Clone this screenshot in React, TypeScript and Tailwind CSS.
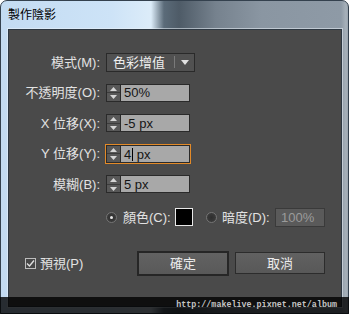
import React from "react";

const font = "font-['Liberation_Sans','Noto_Sans_CJK_TC',sans-serif]";

function Spin() {
  return (
    <div className="flex w-[14px] flex-col border-r border-[#2a2a2a] bg-[#585858]">
      <div className="flex flex-1 items-center justify-center border-b border-[#3c3c3c]">
        <svg width="7" height="4" viewBox="0 0 7 4">
          <path d="M0 4L3.5 0L7 4Z" fill="#d6d6d6" />
        </svg>
      </div>
      <div className="flex flex-1 items-center justify-center">
        <svg width="7" height="4" viewBox="0 0 7 4">
          <path d="M0 0L3.5 4L7 0Z" fill="#d6d6d6" />
        </svg>
      </div>
    </div>
  );
}

function NumField({ children, focused }: { children: React.ReactNode; focused?: boolean }) {
  return (
    <div
      className={
        focused
          ? "flex h-[18px] w-[84px] border border-[#2a2a2a] outline outline-1 outline-[#e38a28]"
          : "flex h-[18px] w-[84px] border border-[#2a2a2a]"
      }
    >
      <Spin />
      <div className="flex flex-1 items-center bg-[#a8a8a8] pl-[3px] text-[13px] leading-none text-[#151515]">
        <span className="whitespace-pre">{children}</span>
      </div>
    </div>
  );
}

function Row({ label, children }: { label: string; children: React.ReactNode }) {
  return (
    <div className="flex h-[30.5px] items-center">
      <div className="w-[91px] text-right text-[13px] leading-none text-[#e2e2e2]">{label}</div>
      <div className="ml-[6px]">{children}</div>
    </div>
  );
}

function Radio({ on }: { on?: boolean }) {
  return (
    <div className="flex h-[11px] w-[11px] items-center justify-center rounded-full border border-[#747474] bg-[radial-gradient(circle,#2e2e2e,#404040)]">
      {on && <div className="h-[3px] w-[3px] rounded-full bg-[#e6e6e6]" />}
    </div>
  );
}

export default function App() {
  return (
    <div className={`relative h-[314px] w-[349px] overflow-hidden bg-white ${font}`}>
      <div className="flex h-full flex-col rounded-t-[7px] border border-[#34414e] bg-[linear-gradient(90deg,#c3dbf2_0px,#cde3f7_110px,#dcecf9_150px,#5b6b79_163px,#4e5b67_178px,#76828e_215px,#8a96a2_260px,#8e9aa6_340px,#a7b1ba_345px,#8a96a2_349px)]">
        {/* title */}
        <div className="flex h-[28px] items-center pl-[7px] text-[12px] leading-none text-black">製作陰影</div>

        {/* panel */}
        <div className="mb-[6px] ml-[7px] mr-[6px] flex-1 border border-[#2e3842] bg-[#4a4a4a] pt-[17px] shadow-[0_0_0_1px_rgba(235,242,250,0.55)]">
          <Row label="模式(M):">
            <div className="flex h-[19px] w-[89px] items-center border border-[#2a2a2a] bg-[#515151]">
              <span className="flex-1 pl-[6px] text-[13px] leading-none text-[#eeeeee]">色彩增值</span>
              <div className="h-[12px] w-px bg-[#7a7a7a]" />
              <div className="flex w-[19px] items-center justify-center">
                <svg width="8" height="5" viewBox="0 0 8 5">
                  <path d="M0 0L4 5L8 0Z" fill="#e2e2e2" />
                </svg>
              </div>
            </div>
          </Row>
          <Row label="不透明度(O):">
            <NumField>50%</NumField>
          </Row>
          <Row label="X 位移(X):">
            <NumField>-5 px</NumField>
          </Row>
          <Row label="Y 位移(Y):">
            <NumField focused>
              {"4"}
              <span className="ml-px inline-block h-[13px] w-px translate-y-[2px] bg-black" />
              {" px"}
            </NumField>
          </Row>
          <Row label="模糊(B):">
            <NumField>5 px</NumField>
          </Row>

          {/* colour / darkness */}
          <div className="flex h-[35px] items-center pl-[97px] text-[13px] leading-none text-[#e2e2e2]">
            <Radio on />
            <span className="ml-[6px] w-[52px]">顏色(C):</span>
            <div className="h-[18px] w-[18px] border border-[#e8e8e8] bg-black" />
            <div className="ml-[13px]">
              <Radio />
            </div>
            <span className="ml-[5px] w-[53px]">暗度(D):</span>
            <div className="flex h-[19px] w-[50px] items-center border border-[#3a3a3a] bg-[#5a5a5a] pl-[5px] text-[#9a9a9a]">
              100%
            </div>
          </div>

          {/* preview + buttons */}
          <div className="mt-[16px] flex h-[25px] items-center text-[13px] leading-none text-[#e2e2e2]">
            <div className="flex w-[128px] items-center pl-[16px]">
              <div className="flex h-[11px] w-[11px] items-center justify-center border border-[#bdbdbd] bg-[#474747]">
                <svg width="9" height="9" viewBox="0 0 9 9">
                  <path d="M1 4.5L3.5 7L8 1.5" stroke="#e0e0e0" strokeWidth="1.4" fill="none" />
                </svg>
              </div>
              <span className="ml-[4px]">預視(P)</span>
            </div>
            <button className="flex h-[25px] w-[92px] items-center justify-center border-2 border-[#262626] bg-[linear-gradient(#626262,#595959)] text-[13px] text-[#ececec]">
              確定
            </button>
            <button className="ml-[6px] flex h-[22px] w-[90px] items-center justify-center border border-[#2c2c2c] bg-[linear-gradient(#616161,#585858)] text-[13px] text-[#ececec]">
              取消
            </button>
          </div>
        </div>
      </div>

      {/* watermark strip */}
      <div className="absolute bottom-0 left-0 right-0 flex h-[17px] items-center justify-end bg-black/80 pr-[12px] font-['Liberation_Mono',monospace] text-[8.4px] font-bold leading-none text-[#c4c4c4]">
        http://makelive.pixnet.net/album
      </div>
    </div>
  );
}
